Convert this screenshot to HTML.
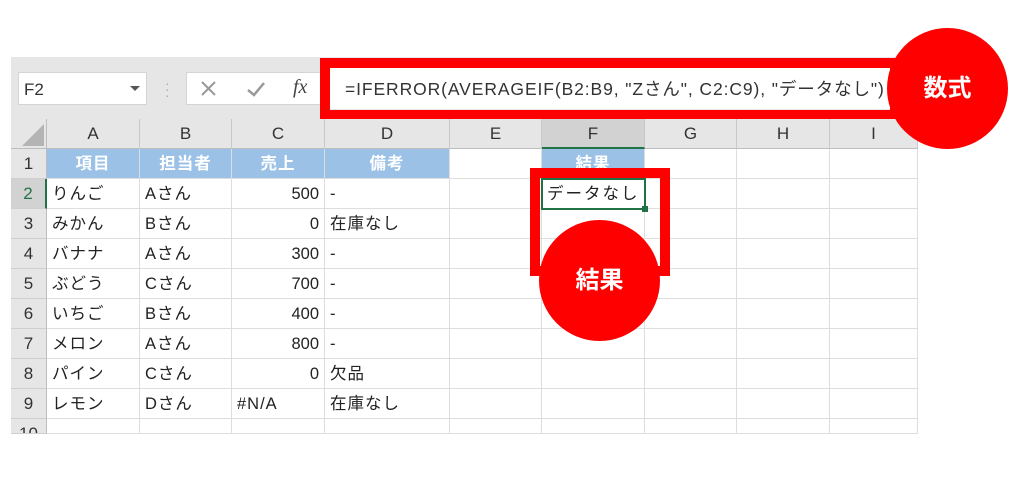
<!DOCTYPE html>
<html><head><meta charset="utf-8"><style>
*{margin:0;padding:0;box-sizing:border-box}
body{width:1024px;height:483px;background:#fff;position:relative;overflow:hidden;font-family:"Liberation Sans","Noto Sans CJK JP",sans-serif;color:#222}
.a{position:absolute}
.g{background:#e6e6e6}
.ch{position:absolute;top:119px;height:30px;text-align:center;line-height:30px;font-size:17px;color:#333;border-right:1px solid #c8c8c8;border-bottom:1px solid #bdbdbd;background:#e6e6e6}
.rh{position:absolute;left:11px;width:36px;height:30px;text-align:center;line-height:30px;font-size:17px;color:#333;background:#e6e6e6;border-bottom:1px solid #cfcfcf;border-right:1px solid #bdbdbd}
.c{position:absolute;height:30px;line-height:30px;font-size:16.5px;letter-spacing:1px;padding:0 5px;white-space:nowrap;border-right:1px solid #dedede;border-bottom:1px solid #dedede;overflow:hidden}
.h{background:#9bc2e6;color:#fff;font-weight:bold;text-align:center}
.r{text-align:right;letter-spacing:0}
.circ{position:absolute;border-radius:50%;background:#f00;color:#fff;font-weight:bold;font-size:24px;text-align:center}
</style></head><body>
<div class="a g" style="left:11px;top:57px;width:907px;height:62px"></div>
<div class="a" style="left:18px;top:72px;width:129px;height:33px;background:#fff;border:1px solid #d4d4d4;font-size:17px;line-height:33px;padding-left:5px;color:#333">F2</div>
<div class="a" style="left:130px;top:86px;width:0;height:0;border-left:5px solid transparent;border-right:5px solid transparent;border-top:5px solid #555"></div>
<div class="a" style="left:165px;top:80px;color:#aaa;font-size:14px;line-height:6px">·<br>·<br>·</div>
<div class="a" style="left:186px;top:72px;width:140px;height:33px;background:#fff;border:1px solid #d4d4d4"></div>
<svg class="a" style="left:200px;top:80px" width="80" height="18"><path d="M2 2L15 15M15 2L2 15" stroke="#999" stroke-width="2"/><path d="M48 10L54 15L64 3" stroke="#999" stroke-width="2.5" fill="none"/></svg>
<div class="a" style="left:293px;top:76px;font-size:20px;font-style:italic;font-family:'Liberation Serif',serif;color:#444">fx</div>
<div class="a" style="left:330px;top:68px;width:560px;height:41px;background:#fff"></div>
<div class="a" style="left:345px;top:76px;font-size:17.5px;letter-spacing:0.9px;color:#333;white-space:nowrap">=IFERROR(AVERAGEIF(B2:B9, "Zさん", C2:C9), "データなし")</div>
<div class="a" style="left:320px;top:58px;width:580px;height:62px;border:10px solid #f00"></div>

<div class="a g" style="left:11px;top:119px;width:36px;height:30px;border-right:1px solid #bdbdbd;border-bottom:1px solid #bdbdbd"></div>
<div class="a" style="left:22px;top:124px;width:0;height:0;border-left:22px solid transparent;border-bottom:22px solid #b4b4b4"></div>
<div class="ch" style="left:47px;width:93px">A</div>
<div class="ch" style="left:140px;width:92px">B</div>
<div class="ch" style="left:232px;width:93px">C</div>
<div class="ch" style="left:325px;width:125px">D</div>
<div class="ch" style="left:450px;width:92px">E</div>
<div class="ch" style="left:542px;width:103px;background:#d2d2d2;border-bottom:2px solid #217346">F</div>
<div class="ch" style="left:645px;width:92px">G</div>
<div class="ch" style="left:737px;width:93px">H</div>
<div class="ch" style="left:830px;width:88px">I</div>

<div class="rh" style="top:149px">1</div>
<div class="rh" style="top:179px;background:#d2d2d2;color:#217346;border-right:2px solid #217346">2</div>
<div class="rh" style="top:209px">3</div>
<div class="rh" style="top:239px">4</div>
<div class="rh" style="top:269px">5</div>
<div class="rh" style="top:299px">6</div>
<div class="rh" style="top:329px">7</div>
<div class="rh" style="top:359px">8</div>
<div class="rh" style="top:389px">9</div>
<div class="rh" style="top:419px;height:15px;line-height:30px;overflow:hidden">10</div>

<div id="g"></div>
<script>
var cols=[[47,93],[140,92],[232,93],[325,125],[450,92],[542,103],[645,92],[737,93],[830,88]];
var data=[
["項目","担当者","売上","備考","","結果"],
["りんご","Aさん","500","-","",""],
["みかん","Bさん","0","在庫なし"],
["バナナ","Aさん","300","-"],
["ぶどう","Cさん","700","-"],
["いちご","Bさん","400","-"],
["メロン","Aさん","800","-"],
["パイン","Cさん","0","欠品"],
["レモン","Dさん","#N/A","在庫なし"],
[]];
var h="";
for(var r=0;r<10;r++){for(var c=0;c<9;c++){var t=data[r][c]||"";var cls="c";
if(r==0&&(c<4||c==5))cls+=" h";
if(r>0&&c==2&&t!="#N/A")cls+=" r";
var ht=r==9?15:30;
h+='<div class="'+cls+'" style="left:'+cols[c][0]+'px;top:'+(149+r*30)+'px;width:'+cols[c][1]+'px;height:'+ht+'px">'+t+'</div>';}}
document.getElementById("g").innerHTML=h;
</script>
<div class="a" style="left:541px;top:178px;width:105px;height:32px;border:2px solid #217346;background:#fff;font-size:16.5px;letter-spacing:2px;line-height:28px;padding-left:4px">データなし</div>
<div class="a" style="left:642px;top:206px;width:6px;height:6px;background:#217346"></div>
<div class="a" style="left:530px;top:168px;width:140px;height:108px;border:10px solid #f00"></div>
<div class="circ" style="left:539px;top:220px;width:121px;height:121px;line-height:121px">結果</div>
<div class="circ" style="left:887px;top:28px;width:121px;height:121px;line-height:121px">数式</div>
</body></html>
